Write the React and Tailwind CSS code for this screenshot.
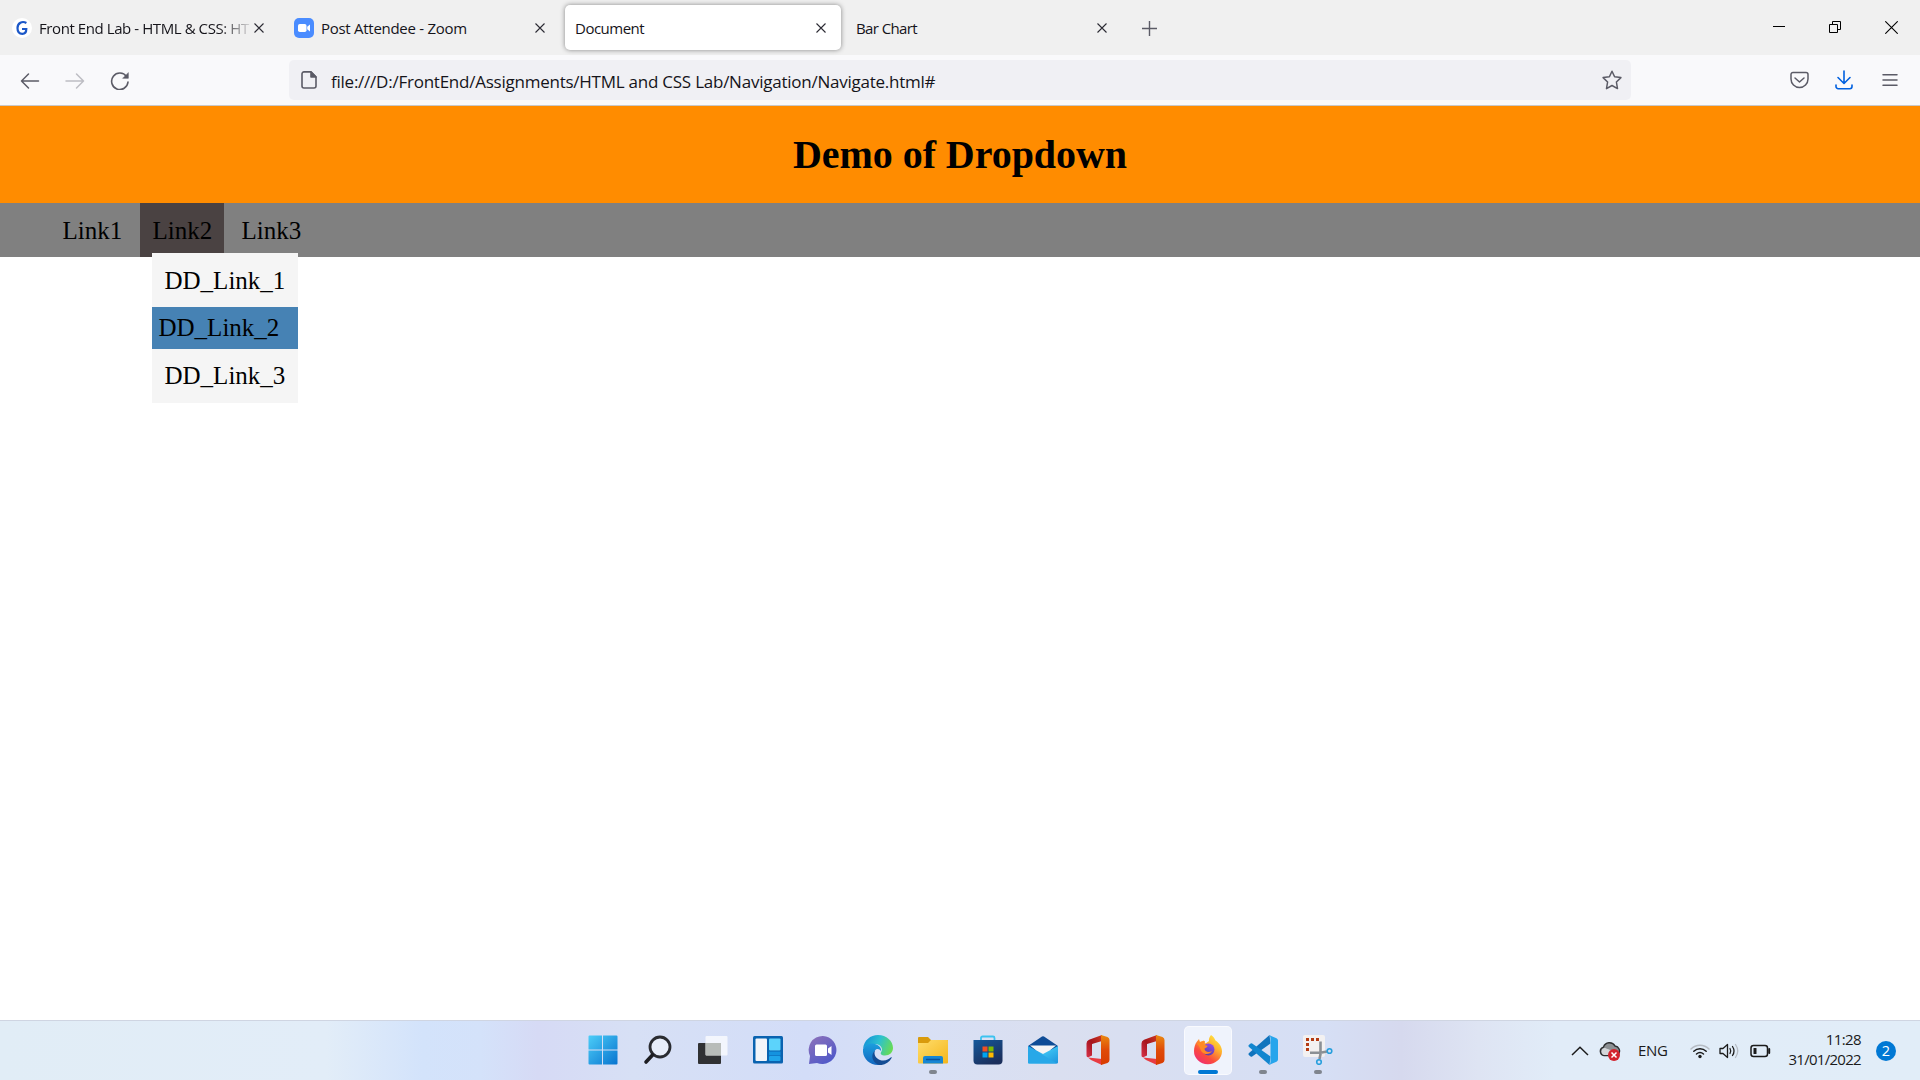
function Cross({ className = "" }) {
  return (
    <svg className={"shrink-0 " + className} width="10" height="10" viewBox="0 0 10 10" stroke="#2b2a33" strokeWidth="1.1" fill="none">
      <path d="M.5 .5 9.5 9.5M9.5 .5 .5 9.5" />
    </svg>
  );
}

function TabBar() {
  return (
    <div className="flex h-[55px] bg-[#f0f0f0] text-[15px] text-[#15141a]">
      <div className="flex h-full w-[282px] items-center pl-[12px]">
        <div className="flex size-5 shrink-0 items-center justify-center rounded-full bg-white">
          <svg width="12" height="16" viewBox="0 0 12 16" fill="none" strokeWidth="2.2">
            <path d="M10.4 3C6.2.6 1.5 3 1.500 8c0 3.600 2 5.800 4.800 5.800 2.600 0 4-1.800 4-4.800H6" stroke="#1b57c8" />
          </svg>
        </div>
        <span className="mt-[2px] ml-[7px] w-[213px] whitespace-nowrap tracking-[-0.42px] [mask-image:linear-gradient(to_right,black_84%,transparent_101%)]">
          Front End Lab - HTML &amp; CSS: HT
        </span>
        <Cross className="ml-[2px]" />
      </div>
      <div className="flex h-full w-[283px] items-center pl-[12px]">
        <svg className="shrink-0" width="20" height="20" viewBox="0 0 20 20">
          <rect width="20" height="20" rx="5" fill="#4a8cff" />
          <rect x="4" y="6" width="8.500" height="8" rx="1.800" fill="#fff" />
          <path d="M13.200 8.700 16 6.600v6.800l-2.800-2.100z" fill="#fff" />
        </svg>
        <span className="mt-[2px] ml-[7px] w-[214px] whitespace-nowrap tracking-[-0.28px]">Post Attendee - Zoom</span>
        <Cross />
      </div>
      <div className="mt-[5px] flex h-[45px] w-[276px] items-center rounded-[5px] bg-white pl-[10px] shadow-[0_0_5px_rgba(0,0,0,0.45)]">
        <span className="mt-[2px] w-[241px] tracking-[-0.5px]">Document</span>
        <Cross />
      </div>
      <div className="flex h-full w-[290px] items-center pl-[15px]">
        <span className="mt-[2px] w-[241px] tracking-[-0.6px]">Bar Chart</span>
        <Cross />
      </div>
      <svg className="mt-[21px] ml-[11px]" width="15" height="15" viewBox="0 0 15 15" stroke="#5b5b66" strokeWidth="1.400">
        <path d="M7.500 0v15M0 7.500h15" />
      </svg>
      <div className="mt-[21px] mr-[22px] ml-auto flex gap-[43px]">
        <svg width="13" height="13" viewBox="0 0 13 13" stroke="#000"><path d="M0 5.500h12" /></svg>
        <svg width="13" height="13" viewBox="0 0 13 13" stroke="#000" fill="none"><path d="M.5 3.500h8v8h-8zM3.500 3.500v-3h8v8h-3" /></svg>
        <svg width="13" height="13" viewBox="0 0 13 13" stroke="#000" strokeWidth="1.100"><path d="M.3.300 12.700 12.700M12.700.300.300 12.700" /></svg>
      </div>
    </div>
  );
}

function Toolbar() {
  return (
    <div className="flex h-[51px] items-start border-b border-[#c9c8c8] bg-[#f9f9fb] pt-[5px] pl-[20px]">
      <div className="flex h-10 w-[269px] items-center gap-[25px]">
        <svg width="20" height="20" viewBox="0 0 20 20" fill="none" stroke="#5b5b66" strokeWidth="1.500" strokeLinecap="round" strokeLinejoin="round">
          <path d="M18.500 11H1.500M8.500 4l-7 7 7 7" />
        </svg>
        <svg width="20" height="20" viewBox="0 0 20 20" fill="none" stroke="#bdbdc3" strokeWidth="1.500" strokeLinecap="round" strokeLinejoin="round">
          <path d="M1 11h17.500M11.500 4l7 7-7 7" />
        </svg>
        <svg width="20" height="20" viewBox="0 0 20 20" fill="none" stroke="#5b5b66" strokeWidth="1.600" strokeLinecap="round">
          <path d="M16.500 6.500A8.200 8.200 0 1 0 18 12" />
          <path d="M18.300 3v5.300H13z" fill="#5b5b66" strokeWidth=".6" />
        </svg>
      </div>
      <div className="flex h-10 w-[1342px] items-center rounded-[5px] bg-[#f0f0f4] pr-[9px] pl-[12px]">
        <svg width="16" height="18" viewBox="0 0 16 18" fill="none" stroke="#5b5b66" strokeWidth="1.600" strokeLinejoin="round">
          <path d="M3 .9h7L15 6v9a2 2 0 0 1-2 2H3a2 2 0 0 1-2-2V3A2 2 0 0 1 3 .9z" />
          <path d="M10 1v5h5z" fill="#5b5b66" />
        </svg>
        <span className="mt-[4px] ml-[14px] grow whitespace-nowrap text-[17px] tracking-[-0.24px] text-[#15141a]">
          file:///D:/FrontEnd/Assignments/HTML and CSS Lab/Navigation/Navigate.html#
        </span>
        <svg width="20" height="20" viewBox="0 0 20 20" fill="none" stroke="#5b5b66" strokeWidth="1.500" strokeLinejoin="round">
          <path d="M10 1.200 12.600 6.800 18.900 7.600 14.400 12 15.500 18.600 10 15.500 4.500 18.600 5.600 12 1.100 7.600 7.400 6.800z" />
        </svg>
      </div>
      <div className="mr-[22px] ml-auto flex h-10 items-center gap-[26px]">
        <svg width="19" height="18" viewBox="0 0 19 18" fill="none" stroke="#5b5b66" strokeWidth="1.500" strokeLinecap="round" strokeLinejoin="round">
          <path d="M3 1.500h13a2 2 0 0 1 2 2V8a8.500 8.500 0 0 1-17 0V3.500a2 2 0 0 1 2-2zM5 7l4.500 4L14 7" />
        </svg>
        <svg width="18" height="20" viewBox="0 0 18 20" fill="none" stroke="#0060df" strokeWidth="1.600" strokeLinecap="round" strokeLinejoin="round">
          <path d="M9 1v12M3 7.500l6 6 6-6M1 15v1.500A2.200 2.200 0 0 0 3.200 18.700h11.600A2.200 2.200 0 0 0 17 16.500V15" />
        </svg>
        <svg className="ml-[3px]" width="16" height="20" viewBox="0 0 16 20" stroke="#5b5b66" strokeWidth="1.500" strokeLinecap="round">
          <path d="M1 4.700h14M1 10h14M1 15.200h14" />
        </svg>
      </div>
    </div>
  );
}

function Page() {
  return (
    <main className='h-[914px] bg-white font-["Liberation_Serif",serif] text-[25px] leading-[29px] text-black'>
      <h1 className="flex h-[97px] items-center justify-center bg-[#ff8c00] pb-px text-[40px] font-bold tracking-[-0.05px]">Demo of Dropdown</h1>
      <nav className="flex h-[54px] bg-[#808080] pl-[50px]">
        <a className="mr-[5px] w-[85px] px-[12.500px] pt-[13px]">Link1</a>
        <div className="relative mr-[5px] w-[84px] bg-[#4a4242] px-[12.500px] pt-[13px]">
          <a>Link2</a>
          <div className="absolute top-[50px] left-[12px] w-[146px] bg-[#f5f5f5]">
            <a className="block h-[54px] px-[12.500px] pt-[13px]">DD_Link_1</a>
            <a className="block h-[42px] bg-[#4682b4] px-[6.500px] pt-[6px]">DD_Link_2</a>
            <a className="block h-[54px] px-[12.500px] pt-[12px]">DD_Link_3</a>
          </div>
        </div>
        <a className="px-[12.500px] pt-[13px]">Link3</a>
      </nav>
    </main>
  );
}

function Office() {
  return (
    <svg width="30" height="30" viewBox="0 0 30 30">
      <defs>
        <linearGradient id="officeLeft" x1="0" y1="1" x2="1" y2="0">
          <stop offset="0" stopColor="#d8324a" />
          <stop offset=".5" stopColor="#a5141d" />
          <stop offset="1" stopColor="#cf3a22" />
        </linearGradient>
        <linearGradient id="officeRight" x1="0" y1="0" x2="0" y2="1">
          <stop offset="0" stopColor="#ea8a12" />
          <stop offset=".5" stopColor="#e04a08" />
          <stop offset="1" stopColor="#d83b01" />
        </linearGradient>
      </defs>
      <path d="M19 0 6 4.800Q3.500 6 3.500 8.500v12q0 2 1.800 1.700L9 20.500V9L19 6z" fill="url(#officeLeft)" />
      <path d="M5 22.500 19 24v6L8 25z" fill="#e83c42" />
      <path d="M18 0 24.500 2Q26.500 3 26.500 5v20q0 2-2 3L18 30z" fill="url(#officeRight)" />
    </svg>
  );
}

const APPS = [
  {
    name: "Start",
    icon: (
      <svg width="30" height="30" viewBox="0 0 30 30">
        <defs><linearGradient id="win" x1="0" y1="0" x2="1" y2="1" ><stop offset="0" stopColor="#4ccdf8" /><stop offset="1" stopColor="#0874cf" /></linearGradient></defs>
        <path d="M1.500.500H14v14H.500v-13a1 1 0 0 1 1-1zM15 .5h13.500a1 1 0 0 1 1 1v13H15zM.5 15.500H14v14H1.500a1 1 0 0 1-1-1zM15 15.500h14.500v13a1 1 0 0 1-1 1H15z" fill="url(#win)" />
      </svg>
    ),
  },
  {
    name: "Search",
    icon: (
      <svg width="30" height="30" viewBox="0 0 30 30" fill="none">
        <circle cx="17" cy="12" r="10" stroke="#2a2c31" strokeWidth="2.800" fill="#e8eefa" />
        <path d="m9.500 20-6.500 7" stroke="#1d1e22" strokeWidth="3.600" strokeLinecap="round" />
      </svg>
    ),
  },
  {
    name: "Task View",
    icon: (
      <svg width="30" height="30" viewBox="0 0 30 30">
        <rect y="8" width="23" height="21" rx="1" fill="#303133" />
        <rect x="7.500" y="1" width="22" height="19.500" rx="1" fill="#fff" fillOpacity=".72" />
        <path d="M7.500 8H23v12.500H8.500a1 1 0 0 1-1-1z" fill="#b8bcb9" />
      </svg>
    ),
  },
  {
    name: "Widgets",
    icon: (
      <svg width="30" height="30" viewBox="0 0 30 30">
        <rect y="1" width="30" height="27.500" rx="1.500" fill="#0a63b0" />
        <rect x="2.500" y="3.500" width="11.500" height="22.500" rx="1" fill="#f3f5f9" />
        <rect x="16" y="3.500" width="11.500" height="12" rx="1" fill="#5cd3fb" />
        <rect x="16" y="16.500" width="11.500" height="4" fill="#1493df" />
        <rect x="16" y="21" width="11.500" height="5" rx="1" fill="#1fa5ea" />
      </svg>
    ),
  },
  {
    name: "Chat",
    icon: (
      <svg width="30" height="30" viewBox="0 0 30 30">
        <defs><linearGradient id="chat" x1="0" y1="0" x2=".7" y2="1"><stop offset="0" stopColor="#8f72b9" /><stop offset="1" stopColor="#5059c9" /></linearGradient></defs>
        <path d="M15 1A14.200 14 0 1 1 9 28L1 29l1-8A14 14 0 0 1 15 1z" fill="url(#chat)" />
        <rect x="7" y="9.500" width="12" height="11.500" rx="1.500" fill="#fff" />
        <path d="m20 13.500 3.500-2.500v9L20 17.500z" fill="#fff" />
      </svg>
    ),
  },
  {
    name: "Edge",
    icon: (
      <svg width="30" height="30" viewBox="0 0 30 30">
        <defs>
          <linearGradient id="edgeTop" x1="0" y1=".3" x2="1" y2=".6"><stop offset="0" stopColor="#1492d8" /><stop offset=".5" stopColor="#2dc1cf" /><stop offset="1" stopColor="#69dc52" /></linearGradient>
          <linearGradient id="edgeLeft" x1="0" y1="0" x2="0" y2="1"><stop offset="0" stopColor="#1c9ede" /><stop offset="1" stopColor="#1266bf" /></linearGradient>
        </defs>
        <path d="M0 14C1 5 7.500 0 15 0c8.500 0 15 6 15 13 0 4.500-3.500 7.500-8 7.500-3.500 0-5-1.500-4-3.200 3-4-1-8.300-6-8.300C6 9 1.500 11 0 14z" fill="url(#edgeTop)" />
        <path d="M0 14c2-4.500 7-6.500 12-5 4 1.200 6.500 4 6 7-1.500-2-4-3-6-.500-3.500 5-1 12 7 14C8 32-1 24 0 14z" fill="url(#edgeLeft)" />
        <path d="M12 15.500c-2 5 2.500 10 8.500 10 3 0 5.500-1.500 7.500-3.200.600-.3 1 .2.600.8C26 28 21 30.500 16 30 9.500 28 7 20 12 15.500z" fill="#134c94" />
      </svg>
    ),
  },
  {
    name: "File Explorer",
    running: true,
    icon: (
      <svg width="30" height="30" viewBox="0 0 30 30">
        <defs><linearGradient id="folder" x1="0" y1="0" x2="1" y2="1"><stop offset="0" stopColor="#ffdd6c" /><stop offset="1" stopColor="#f4b61b" /></linearGradient></defs>
        <path d="M0 3a1 1 0 0 1 1-1h9l3 3h16a1 1 0 0 1 1 1v10H0z" fill="#d99b0c" />
        <path d="M0 8h10l3-3h16a1 1 0 0 1 1 1v21.500a1 1 0 0 1-1 1H1a1 1 0 0 1-1-1z" fill="url(#folder)" />
        <path d="M5 28.500V23a2 2 0 0 1 2-2h16a2 2 0 0 1 2 2v5.500z" fill="#1786d3" />
        <path d="M8.500 24.500h13" stroke="#0a529c" strokeWidth="1.300" strokeLinecap="round" />
      </svg>
    ),
  },
  {
    name: "Store",
    icon: (
      <svg width="30" height="30" viewBox="0 0 30 30">
        <defs><linearGradient id="store" x1="0" y1="0" x2=".6" y2="1"><stop offset="0" stopColor="#14599c" /><stop offset="1" stopColor="#1b2f5c" /></linearGradient></defs>
        <path d="M8 6V3a1.500 1.500 0 0 1 1.500-1.500h10.500A1.500 1.500 0 0 1 21.500 3v3" fill="none" stroke="#3cc3f0" strokeWidth="1.800" />
        <path d="M.500 5h29v20.500a4 4 0 0 1-4 4h-21a4 4 0 0 1-4-4z" fill="url(#store)" />
        <path d="M9.500 11.500h5v5h-5z" fill="#f25022" /><path d="M15.500 11.500h5v5h-5z" fill="#7fba00" />
        <path d="M9.500 17.500h5v5h-5z" fill="#00a4ef" /><path d="M15.500 17.500h5v5h-5z" fill="#ffb900" />
      </svg>
    ),
  },
  {
    name: "Mail",
    icon: (
      <svg width="30" height="30" viewBox="0 0 30 30">
        <defs><linearGradient id="mail" x1="0" y1="0" x2="1" y2="1"><stop offset="0" stopColor="#1a7ed0" /><stop offset=".5" stopColor="#38bdf0" /><stop offset="1" stopColor="#1d94dd" /></linearGradient></defs>
        <path d="M0 11 14 1.500q1-.700 2 0L30 11v4H0z" fill="#0e4c96" />
        <path d="M2 10.500h26L15 21z" fill="#f5f5f5" />
        <path d="M0 11v16.500a1 1 0 0 0 1 1h28a1 1 0 0 0 1-1V11L15 19z" fill="url(#mail)" />
        <path d="m0 11 29 17.500H1a1 1 0 0 1-1-1z" fill="#28a8e8" />
      </svg>
    ),
  },
  { name: "Office", icon: <Office /> },
  { name: "Office Hub", icon: <Office /> },
  {
    name: "Firefox",
    active: true,
    icon: (
      <svg width="30" height="30" viewBox="0 0 30 30">
        <defs>
          <linearGradient id="fox" x1=".9" y1="0" x2=".2" y2="1"><stop offset="0" stopColor="#fff04a" /><stop offset=".35" stopColor="#ffb52d" /><stop offset=".7" stopColor="#fb4b3d" /><stop offset="1" stopColor="#ee2b76" /></linearGradient>
          <linearGradient id="foxGlobe" x1=".8" y1="0" x2=".3" y2="1"><stop offset="0" stopColor="#9a4bea" /><stop offset="1" stopColor="#5140a8" /></linearGradient>
        </defs>
        <path d="M18 0c2.500 1.500 3.500 3.500 4.500 5.500 4 2.500 6.500 6.500 6.500 11A14 13 0 0 1 1 16c0-3.500 1-7 3-9.500L6 4l1 3 4-1.500 1.500 3L16 6c-.5-2 .5-4 2-6z" fill="url(#fox)" />
        <circle cx="15.500" cy="14.500" r="6" fill="url(#foxGlobe)" />
        <path d="M3.500 8.500 7 7l5-1-2 3.500 4.500 1.300c.5 1.200-1.500 2.200-3 2.700 0 3 4 4.500 7.500 2.500-2 4-8 4-10.500.500C7 14 7 11 3.500 8.500z" fill="#ff8a25" />
      </svg>
    ),
  },
  {
    name: "Visual Studio Code",
    running: true,
    icon: (
      <svg width="30" height="30" viewBox="0 0 30 30">
        <path d="M21.500 0 .8 18.300q-.8.800 0 1.600L2.600 21.500q.7.600 1.600 0L22.500 8.500z" fill="#1073bd" />
        <path d="M21.500 30 .8 11.700q-.8-.8 0-1.600L2.600 8.500q.7-.6 1.600 0L22.500 21.500z" fill="#1286cf" />
        <path d="m21 0 7.500 3.300Q30 4 30 5.500v19q0 1.500-1.500 2.200L21 30q1.500-1 1.500-3V3q0-2-1.500-3z" fill="#27a5ec" />
      </svg>
    ),
  },
  {
    name: "Snipping Tool",
    running: true,
    icon: (
      <svg width="30" height="30" viewBox="0 0 30 30" fill="none">
        <rect width="22" height="22" rx="2" fill="#f3f1f1" />
        <path d="M3 4.500h13" stroke="#b43b13" strokeWidth="3" strokeDasharray="3 2" />
        <path d="M4.500 8v8" stroke="#b43b13" strokeWidth="3" strokeDasharray="3 2" />
        <path d="M17.500 6.500V19L16.500 24M7 17.800h10.500L24 16.500" stroke="#8b9095" strokeWidth="2.600" />
        <circle cx="16" cy="27" r="2.300" stroke="#279fdc" strokeWidth="1.600" />
        <circle cx="26.500" cy="16" r="2.300" stroke="#279fdc" strokeWidth="1.600" />
      </svg>
    ),
  },
];

function Tray() {
  return (
    <div className="ml-auto flex h-full items-center pr-[24px] text-[15px] text-[#1b1b1b]">
      <svg width="18" height="10" viewBox="0 0 18 10" fill="none" stroke="#1b1b1b" strokeWidth="1.500"><path d="M1 9 9 1.200 17 9" /></svg>
      <svg className="ml-[10px]" width="22" height="20" viewBox="0 0 22 20">
        <path d="M5 14.500a4.300 4.300 0 0 1-.5-8.400A6.300 6.300 0 0 1 16 5a5 5 0 0 1 3.500 8l-3 1.500z" fill="#8c9093" stroke="#2c2e30" strokeWidth="1.400" />
        <path d="M5 14a3.700 3.700 0 0 1 0-7c3 0 4 2 8 2l-3 5z" fill="#d3d6d9" />
        <circle cx="15" cy="14" r="6" fill="#d3242e" />
        <path d="m12.500 11.500 5 5m0-5-5 5" stroke="#fff" strokeWidth="1.500" />
      </svg>
      <span className="ml-[17px] w-[52px] tracking-[-0.3px]">ENG</span>
      <svg width="20" height="16" viewBox="0 0 20 16" fill="none" strokeLinecap="round">
        <path d="M1 6a12.500 12.500 0 0 1 18 0" stroke="#b6bcc4" strokeWidth="1.500" />
        <path d="M3.800 8.300a9 9 0 0 1 12.400 0M6.500 11a5.300 5.300 0 0 1 7 0" stroke="#1b1b1b" strokeWidth="1.500" />
        <circle cx="10" cy="13.500" r="1.700" fill="#1b1b1b" />
      </svg>
      <svg className="ml-[9px]" width="21" height="16" viewBox="0 0 21 16" fill="none" stroke="#1b1b1b" strokeWidth="1.300" strokeLinecap="round" strokeLinejoin="round">
        <path d="M1 5.500h3L8.500 1.500v13L4 10.500H1zM11 5.500q1.500 2.500 0 5M13.500 3.500q3 4.500 0 9" />
        <path d="M16.500 1.500q4.500 6.500 0 13" stroke="#b6bcc4" />
      </svg>
      <svg className="ml-[10px]" width="21" height="14" viewBox="0 0 21 14" fill="none" stroke="#1b1b1b" strokeWidth="1.500">
        <rect x="1" y="1.500" width="16.500" height="11" rx="2.500" />
        <rect x="3.500" y="4" width="3" height="6" rx=".5" fill="#1b1b1b" stroke="none" />
        <path d="M19.200 5v4" strokeWidth="2" strokeLinecap="round" />
      </svg>
      <div className="mb-[4px] w-[90px] text-right leading-5">
        <div className="tracking-[-0.6px]">11:28</div>
        <div className="tracking-[-0.7px]">31/01/2022</div>
      </div>
      <div className="ml-[15px] flex size-5 items-center justify-center rounded-full bg-[#0078d4] text-[14.500px] leading-5 text-white">2</div>
    </div>
  );
}

function Taskbar() {
  return (
    <footer className="flex h-[60px] border-t border-[#cfd5e2] bg-[linear-gradient(to_right,#e1edf6_0%,#e2edf8_17%,#d3e3fb_22%,#d4e2fa_25%,#d6daf5_28%,#d7e0f5_33%,#d3ddf8_42%,#d8e0f5_48%,#dadff0_55%,#d8dff2_62%,#d6dff5_69%,#d6d9ee_73%,#dee4f3_77%,#e1ecf8_81%,#e1edf8_100%)]">
      <div className="ml-[575.500px] flex">
        {APPS.map((app) => (
          <div key={app.name} className="flex w-[55px] justify-center pt-[5px]">
            <div className={app.active ? "flex h-[49px] w-[48px] flex-col items-center rounded-[5px] border border-white/60 bg-[#eff3fc] pt-[8px]" : "flex h-[49px] w-[48px] flex-col items-center pt-[9px]"}>
              {app.icon}
              {app.active && <div className="mt-[5px] h-1 w-5 rounded-full bg-[#0078d4]" />}
              {app.running && <div className="mt-[5px] h-1 w-2 rounded-full bg-[#7f858e]" />}
            </div>
          </div>
        ))}
      </div>
      <Tray />
    </footer>
  );
}

export default function App() {
  return (
    <div className='h-[1080px] w-[1920px] overflow-hidden font-["Open_Sans","Noto_Sans",sans-serif]'>
      <TabBar />
      <Toolbar />
      <Page />
      <Taskbar />
    </div>
  );
}
